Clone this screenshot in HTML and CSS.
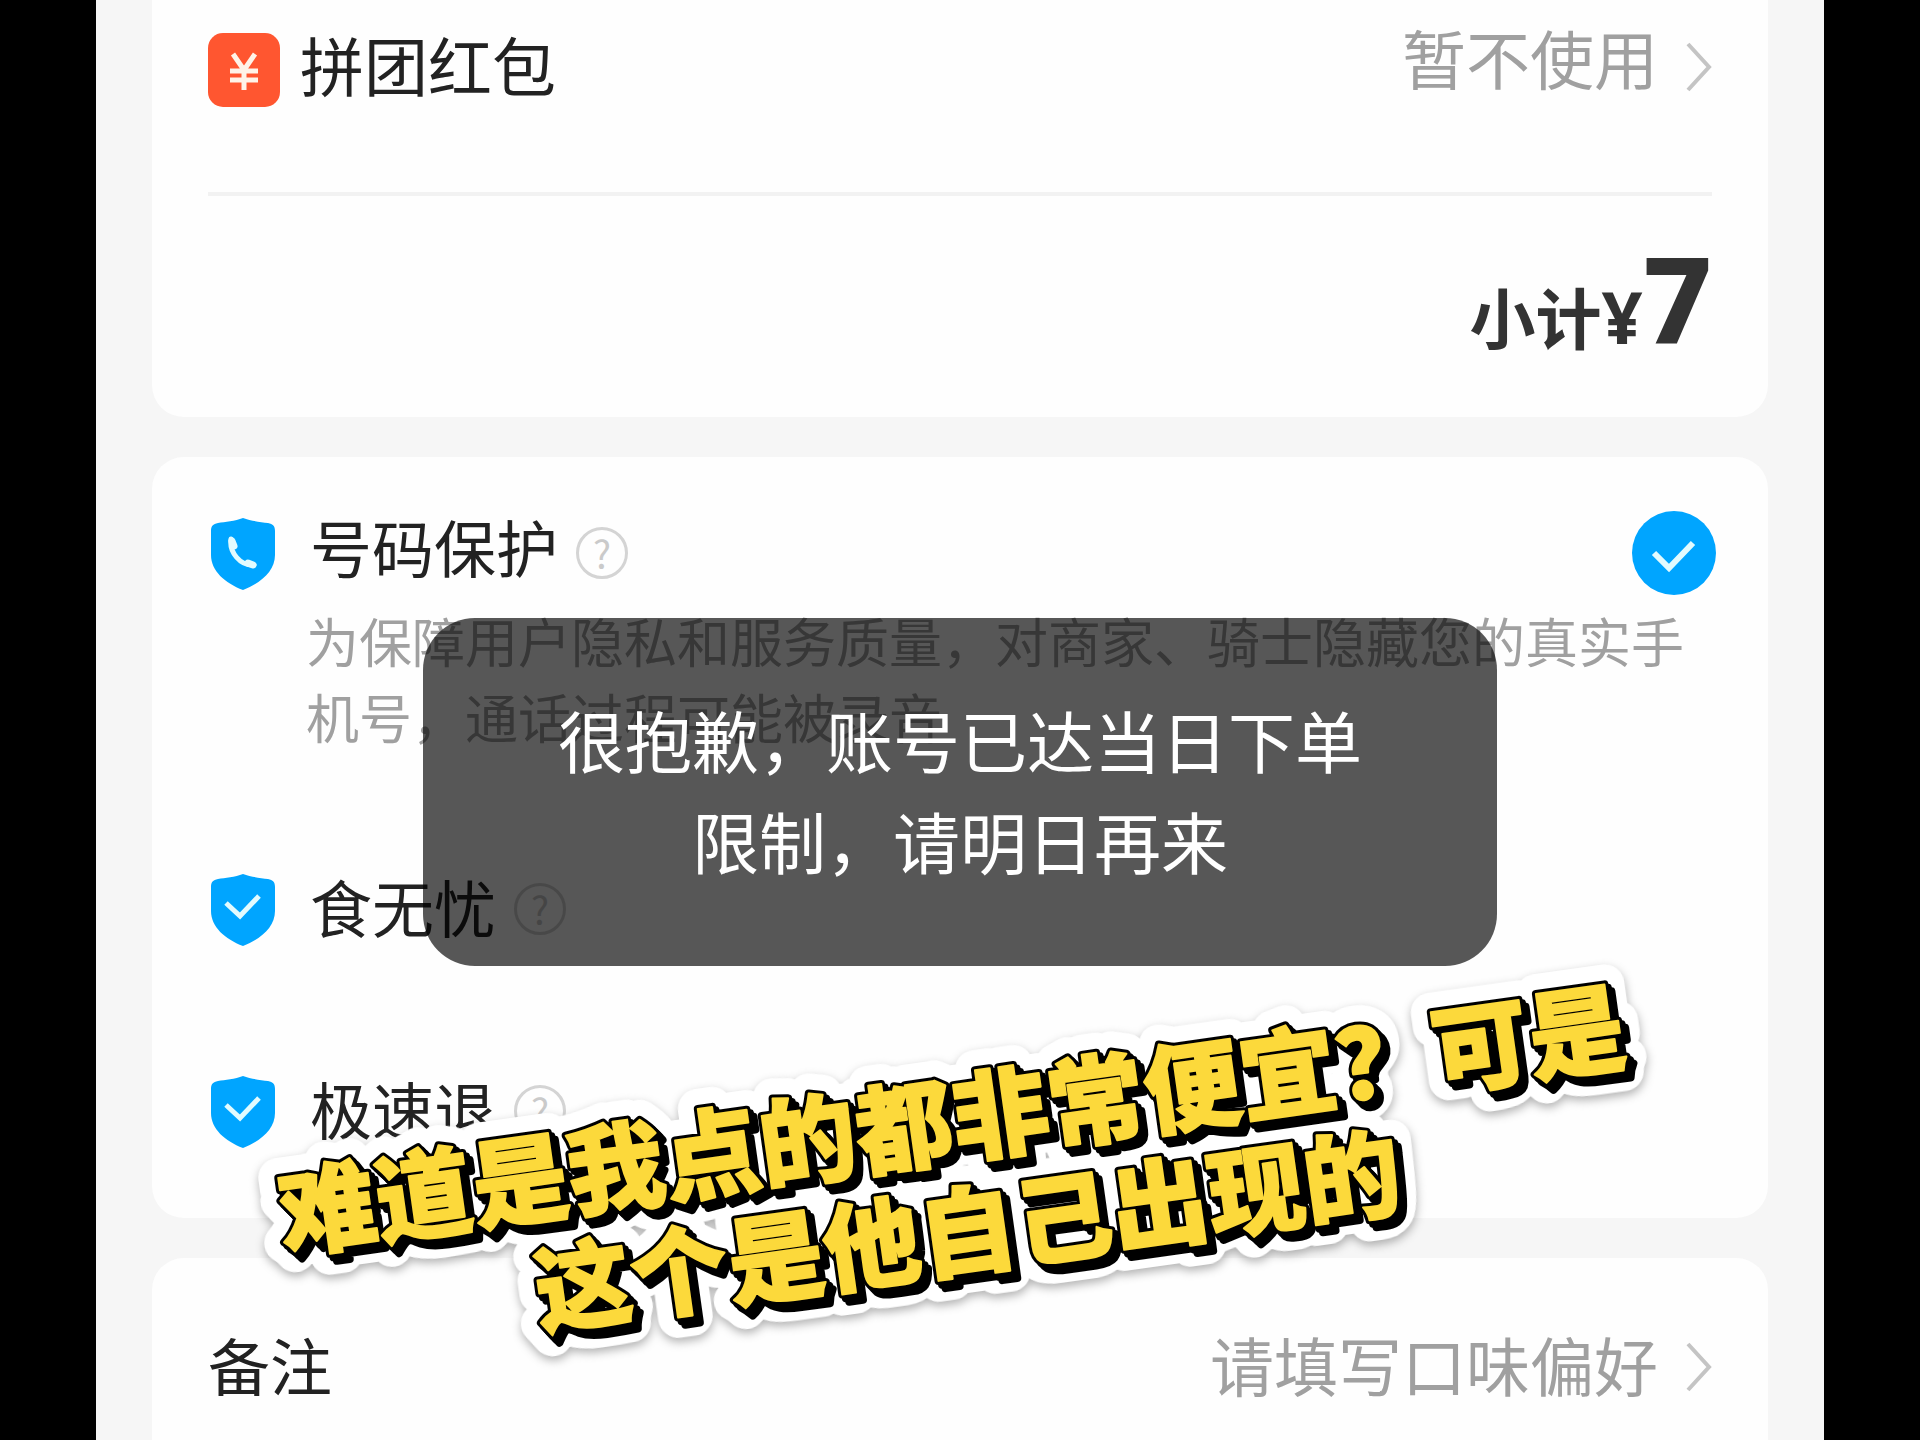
FILE: index.html
```html
<!DOCTYPE html>
<html lang="zh-CN">
<head>
<meta charset="utf-8">
<title>确认订单</title>
<link rel="stylesheet" href="styles.css">
</head>
<body>
<svg class="defs" aria-hidden="true">
  <symbol id="shield" viewBox="0 0 74 74">
    <path fill="#00a5ff" d="M35 2C27 5 17 6 10 7C5 8 3 10 3 15V39C3 55 17 67 35 74C53 67 67 55 67 39V15C67 10 65 8 60 7C53 6 43 5 35 2Z"/>
  </symbol>
  <symbol id="tick" viewBox="0 0 74 74">
    <path fill="none" stroke="#e2fbff" stroke-width="5" d="M18 31L32 44L51 24"/>
  </symbol>
  <symbol id="chevron" viewBox="0 0 26 50">
    <path fill="none" stroke="#c4c4c4" stroke-width="4" d="M2 2L23 25L2 48"/>
  </symbol>
</svg>
<main class="screen">
  <section class="card card-first">
    <div class="row row-coupon">
      <svg class="icon" viewBox="0 0 74 74" aria-hidden="true">
        <rect width="72" height="74" rx="15" fill="#ff5630"/>
        <path fill="none" stroke="#fff3e8" stroke-width="5" d="M25 21L36 37L47 21M36 36V57M22 38H50M22 47H50"/>
      </svg>
      <span class="label label-high">拼团红包</span>
      <button class="value" type="button"><span class="value-high">暂不使用</span><svg class="chevron chevron-high"><use href="#chevron"/></svg></button>
    </div>
    <p class="subtotal">小计<span class="yen">¥</span><strong>7</strong></p>
  </section>

  <section class="card card-services">
    <div class="row row-privacy">
      <svg class="icon" viewBox="0 0 74 74" aria-hidden="true">
        <use href="#shield"/>
        <path fill="none" stroke="#e2fbff" stroke-width="5" stroke-linecap="round" stroke-linejoin="round" d="M23 23C21 36 32 50 46 49"/>
        <path fill="none" stroke="#e2fbff" stroke-width="7" stroke-linecap="round" d="M24 25L26 30M40 47L45 49"/>
      </svg>
      <label class="label label-high" for="privacy">号码保护</label>
      <button class="help" type="button" aria-label="说明">?</button>
      <span class="check">
        <input type="checkbox" id="privacy" checked>
        <svg viewBox="0 0 84 84" aria-hidden="true"><path fill="none" stroke="#e2fbff" stroke-width="6" d="M22 42L37 57L61 32"/></svg>
      </span>
    </div>
    <p class="note">为保障用户隐私和服务质量，对商家、骑士隐藏您的真实手机号，通话过程可能被录音</p>
    <div class="row row-food">
      <svg class="icon" viewBox="0 0 74 74" aria-hidden="true"><use href="#shield"/><use href="#tick"/></svg>
      <span class="label">食无忧</span>
      <button class="help" type="button" aria-label="说明">?</button>
    </div>
    <div class="row row-refund">
      <svg class="icon" viewBox="0 0 74 74" aria-hidden="true"><use href="#shield"/><use href="#tick"/></svg>
      <span class="label">极速退</span>
      <button class="help" type="button" aria-label="说明">?</button>
    </div>
  </section>

  <section class="card card-last">
    <div class="row">
      <span class="label">备注</span>
      <button class="value" type="button"><span class="value-text">请填写口味偏好</span><svg class="chevron"><use href="#chevron"/></svg></button>
    </div>
  </section>

  <div class="toast" role="alert">很抱歉，账号已达当日下单<br>限制，请明日再来</div>

  <svg class="caption" viewBox="0 0 1480 340">
    <g class="caption-edge"><use href="#caption-text"/></g>
    <g class="caption-depth"><use href="#caption-text" x="6" y="8"/><use href="#caption-text" x="3" y="4"/><use href="#caption-text"/></g>
    <g class="caption-face">
      <text id="caption-text" text-anchor="middle"><tspan x="740" y="148">难道是我点的都非常便宜？可是</tspan><tspan x="740" y="260">这个是他自己出现的</tspan></text>
    </g>
  </svg>
</main>
</body>
</html>
```

FILE: styles.css
```css
* {
  box-sizing: border-box;
}

body {
  margin: 0;
  padding: 0 5%;
  background: #000;
  color: #222;
  font-family: "Noto Sans CJK SC", sans-serif;
}

button {
  padding: 0;
  border: 0;
  background: none;
  font-family: inherit;
}

p {
  margin: 0;
}

.defs {
  position: absolute;
  width: 0;
  height: 0;
}

.screen {
  position: relative;
  display: flex;
  flex-direction: column;
  gap: 40px;
  min-height: 100vh;
  padding: 0 56px;
  overflow: hidden;
  background: #f6f6f6;
}

.card {
  padding: 0 56px;
  border-radius: 32px;
  background: #fefefe;
}

.card-first {
  border-radius: 0 0 32px 32px;
  padding-bottom: 41px;
}

.card-services {
  padding-top: 53px;
  padding-bottom: 70px;
}

.card-last {
  flex: 1;
  border-radius: 32px 32px 0 0;
  padding-top: 71px;
}

.row {
  display: flex;
  align-items: center;
  min-height: 72px;
}

.row-coupon {
  padding: 22px 0 74px;
  border-bottom: 4px solid #f2f2f2;
}

.row-privacy {
  min-height: 86px;
}

.row-food {
  margin-top: 118px;
}

.row-refund {
  margin-top: 128px;
}

.icon {
  flex: none;
  width: 74px;
  height: 74px;
  margin-right: 28px;
}

.row-coupon .icon {
  margin-right: 18px;
}

.label {
  padding-bottom: 6px;
  font-size: 62px;
  line-height: 68px;
}

.row-coupon .label {
  font-size: 64px;
}

.label-high {
  padding-bottom: 14px;
}

.value {
  display: flex;
  align-items: center;
  gap: 28px;
  margin-left: auto;
  color: #a0a0a0;
  font-size: 64px;
  line-height: 68px;
}

.value-text {
  padding-bottom: 8px;
}

.value-high {
  padding-bottom: 28px;
}

.chevron {
  width: 26px;
  height: 50px;
}

.chevron-high {
  margin-bottom: 6px;
}

.help {
  width: 52px;
  height: 52px;
  margin-left: 18px;
  border: 3px solid #d4d4d4;
  border-radius: 50%;
  color: #cacaca;
  font-size: 38px;
  line-height: 44px;
}

.check {
  display: grid;
  margin: 0 -4px 0 auto;
}

.check > * {
  grid-area: 1 / 1;
  width: 84px;
  height: 84px;
  margin: 0;
}

.check input {
  appearance: none;
  border-radius: 50%;
  background: #00a5ff;
}

.check svg {
  pointer-events: none;
}

.note {
  margin: 6px 0 0 98px;
  color: #a0a0a0;
  font-size: 53px;
  line-height: 76px;
}

.subtotal {
  display: flex;
  align-items: baseline;
  justify-content: flex-end;
  padding: 42px 0 0;
  color: #333;
  font-size: 66px;
  font-weight: 700;
  line-height: 120px;
}

.yen {
  font-family: "Noto Sans", sans-serif;
  font-size: 72px;
}

.subtotal strong {
  font-family: "Noto Sans", sans-serif;
  font-size: 120px;
  font-weight: 800;
}

.toast {
  position: absolute;
  top: 618px;
  left: 50%;
  width: 1074px;
  padding: 70px 0 76px;
  transform: translateX(-50%);
  border-radius: 52px;
  background: rgba(0, 0, 0, 0.66);
  color: #fff;
  font-size: 67px;
  line-height: 101px;
  text-align: center;
}

.caption {
  position: absolute;
  top: 1008px;
  left: 50%;
  width: 1480px;
  height: 340px;
  overflow: visible;
  transform: translateX(-50%) rotate(-8deg);
  font-size: 97px;
  font-weight: 900;
  stroke-linejoin: round;
}

.caption-edge {
  fill: #fff;
  stroke: #fff;
  stroke-width: 40px;
  filter: drop-shadow(0 4px 5px rgba(0, 0, 0, 0.3));
}

.caption-depth {
  fill: #000;
  stroke: #000;
  stroke-width: 8px;
}

.caption-face {
  fill: #fcd93b;
  stroke: #fcd93b;
  stroke-width: 2px;
}
```
